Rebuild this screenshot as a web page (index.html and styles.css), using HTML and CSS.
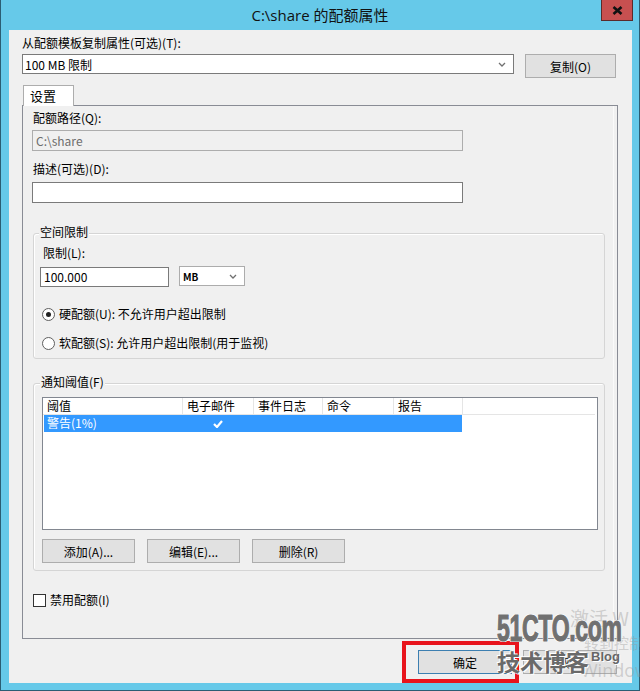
FILE: index.html
```html
<!DOCTYPE html>
<html lang="zh-CN">
<head>
<meta charset="utf-8">
<title>C:\share 的配额属性</title>
<link rel="stylesheet" href="styles.css">
</head>
<body>
<div class="window">
  <div class="titlebar">
    <span class="title">C:\share 的配额属性</span>
    <div class="close"><svg width="11" height="9" viewBox="0 0 11 9"><path d="M1.5 1 L9.5 8 M9.5 1 L1.5 8" stroke="#111" stroke-width="2.6" fill="none"/></svg></div>
  </div>
  <div class="client">
    <div class="lbl top-lbl">从配额模板复制属性(可选)(T):</div>
    <div class="tpl-row">
      <div class="combo wide"><span>100 MB 限制</span><svg class="chev" width="8" height="5" viewBox="0 0 8 5"><path d="M1 1 L4 4 L7 1" stroke="#707070" stroke-width="1.3" fill="none"/></svg></div>
      <div class="btn copy">复制(O)</div>
    </div>
    <div class="tabs"><div class="tab">设置</div></div>
    <div class="panel">
      <div class="lbl l-path">配额路径(Q):</div>
      <div class="input disabled i-path">C:\share</div>
      <div class="lbl l-desc">描述(可选)(D):</div>
      <div class="input i-desc"></div>
      <div class="group g-space">
        <div class="legend">空间限制</div>
        <div class="lbl l-limit">限制(L):</div>
        <div class="limit-row">
          <div class="input num">100.000</div>
          <div class="combo unit"><span class="mb">MB</span><svg class="chev" width="8" height="5" viewBox="0 0 8 5"><path d="M1 1 L4 4 L7 1" stroke="#707070" stroke-width="1.3" fill="none"/></svg></div>
        </div>
        <div class="radio r1"><span class="dot on"></span>硬配额(U): 不允许用户超出限制</div>
        <div class="radio r2"><span class="dot"></span>软配额(S): 允许用户超出限制(用于监视)</div>
      </div>
      <div class="group g-notify">
        <div class="legend">通知阈值(F)</div>
        <div class="list">
          <div class="list-head">
            <div class="cell c1">阈值</div>
            <div class="cell c2">电子邮件</div>
            <div class="cell c3">事件日志</div>
            <div class="cell c4">命令</div>
            <div class="cell c5">报告</div>
          </div>
          <div class="list-row sel">
            <div class="cell c1">警告(1%)</div>
            <div class="cell c2 center"><svg width="10" height="8" viewBox="0 0 10 8"><path d="M1 4 L4 7 L9 1" stroke="#fff" stroke-width="2.2" fill="none"/></svg></div>
            <div class="cell c3"></div>
            <div class="cell c4"></div>
            <div class="cell c5"></div>
          </div>
        </div>
        <div class="btn-row">
          <div class="btn small">添加(A)...</div>
          <div class="btn small">编辑(E)...</div>
          <div class="btn small">删除(R)</div>
        </div>
      </div>
      <div class="check-row"><span class="box"></span>禁用配额(I)</div>
    </div>
    <div class="footer">
      <div class="btn foot default">确定</div>
      <div class="btn foot">取消</div>
    </div>
    <div class="redbox"></div>
    <div class="watermark">
      <span class="ghost g1">激活 W</span>
      <span class="ghost g2">转到控制</span>
      <span class="ghost g3">Windows</span>
      <span class="wm-big">51CTO.com</span>
      <span class="wm-cn">技术博客</span>
      <span class="wm-blog">Blog</span>
    </div>
  </div>
</div>
</body>
</html>
```
FILE: styles.css
```css
* { box-sizing: border-box; }
html, body { margin: 0; padding: 0; }
body {
  width: 640px; height: 691px; overflow: hidden; background: #66c9e9;
  font-family: "Noto Sans CJK SC", "Noto Sans", sans-serif;
  font-size: 12px; color: #000;
}
.window {
  width: 640px; height: 691px; background: #66c9e9;
  border-left: 1px solid #2b5d73; border-right: 1px solid #2b5d73; border-bottom: 1px solid #2b5d73;
  display: flex; flex-direction: column;
}
.titlebar { height: 30px; position: relative; display: flex; align-items: center; justify-content: center; flex: none; }
.title { font-family: "Open Sans", "Noto Sans CJK SC", sans-serif; font-size: 15px; color: #111; line-height: 20px; margin-top: -1px; }
.close {
  position: absolute; top: 0; right: 6px; width: 32px; height: 21px;
  background: #c75050; border: 1px solid #5b2a2a; border-top: none;
  display: flex; align-items: center; justify-content: center;
}
.client {
  position: relative; margin: 0 7px 0 8px; height: 653px; background: #f0f0f0;
  padding-top: 5px; flex: none;
}
.lbl { line-height: 16px; height: 16px; white-space: nowrap; }
.top-lbl { margin-left: 13px; }
.tpl-row { display: flex; align-items: flex-start; margin-top: 3px; margin-left: 13px; gap: 11px; }
.combo {
  height: 20px; background: #fff; border: 1px solid #7a7a7a;
  display: flex; align-items: center; justify-content: space-between; padding: 0 7px 0 2px;
}
.combo.wide { width: 492px; }
.btn {
  background: #e1e1e1; border: 1px solid #adadad; height: 24px;
  display: flex; align-items: center; justify-content: center; white-space: nowrap;
}
.btn.copy { width: 91px; }
.tabs { margin-top: 7px; margin-left: 14px; height: 21px; margin-bottom: -1px; position: relative; z-index: 1; display: flex; }
.tab {
  width: 51px; height: 21px; background: #fff; border: 1px solid #adadad; border-bottom: none;
  padding-left: 6px; line-height: 19px; font-size: 13px;
}
.panel {
  margin-left: 13px; width: 596px; height: 534px; border: 1px solid #898c95;
  box-shadow: inset -3px 0 0 #f0f0f0, inset -4px 0 0 #fafafa;
  padding-top: 4px;
}
.l-path { margin-left: 10px; }
.input { height: 21px; border: 1px solid #7a7a7a; background: #fff; padding-left: 3px; line-height: 19px; white-space: nowrap; }
.i-path { margin: 4px 0 0 9px; width: 431px; }
.input.disabled { background: #f0f0f0; border-color: #adadad; color: #6d6d6d; }
.l-desc { margin: 10px 0 0 10px; }
.i-desc { margin: 5px 0 0 9px; width: 431px; }
.group {
  margin-left: 10px; width: 572px; border: 1px solid #d5d5d5; border-radius: 3px;
  box-shadow: inset 1px 1px 0 #fff;
}
.g-space { margin-top: 30px; height: 126px; }
.g-notify { margin-top: 24px; height: 188px; }
.legend {
  width: fit-content; background: #f0f0f0; line-height: 16px; height: 16px;
  margin: -10px 0 0 5px; padding: 0 1px;
}
.g-notify .legend { margin-left: 6px; }
.l-limit { margin: 5px 0 0 9px; }
.limit-row { display: flex; align-items: flex-start; margin: 5px 0 0 6px; gap: 10px; }
.input.num { width: 129px; height: 20px; margin-top: 1px; line-height: 18px; padding-left: 3px; }
.combo.unit { width: 66px; border-color: #acacac; padding-left: 3px; }
.mb { font-size: 10px; font-weight: bold; }
.radio { display: flex; align-items: center; line-height: 16px; height: 16px; margin-left: 8px; gap: 4px; }
.r1 { margin-top: 19px; }
.r2 { margin-top: 13px; }
.dot {
  width: 13px; height: 13px; border-radius: 50%; border: 1px solid #5f5f5f; background: #fff;
  display: flex; align-items: center; justify-content: center;
}
.dot.on::after { content: ""; width: 5px; height: 5px; border-radius: 50%; background: #222; }
.list {
  margin: 7px 0 0 8px; width: 556px; height: 133px; background: #fff; border: 1px solid #828790;
}
.list-head { display: flex; height: 17px; border-bottom: 1px solid #e5e5e5; margin-right: 2px; }
.cell { line-height: 16px; padding-left: 4px; border-right: 1px solid #e5e5e5; white-space: nowrap; }
.list-row .cell { border-right: none; }
.c1 { width: 140px; }
.c2 { width: 71px; }
.c3 { width: 69px; }
.c4 { width: 71px; }
.c5 { width: 69px; }
.list-row { display: flex; height: 17px; width: 418px; margin-left: 1px; }
.list-row .c1 { width: 139px; padding-left: 3px; }
.list-row.sel { background: #3399ff; color: #fff; }
.cell.center { display: flex; align-items: center; justify-content: center; padding-left: 0; }
.btn-row { display: flex; gap: 12px; margin: 9px 0 0 8px; }
.btn.small { width: 93px; }
.check-row { display: flex; align-items: center; height: 16px; margin: 21px 0 0 10px; gap: 4px; line-height: 16px; }
.box { width: 13px; height: 13px; border: 1px solid #333; background: #fff; }
.footer { display: flex; justify-content: flex-end; gap: 11px; margin: 11px 15px 0 0; }
.btn.foot { width: 94px; height: 24px; }
.btn.default { border-color: #3c7fb1; }
.redbox {
  position: absolute; left: 393px; top: 611px; width: 117px; height: 42px;
  border: 4px solid #e8141c; pointer-events: none;
}
.watermark { position: absolute; left: 0; top: 0; width: 100%; height: 100%; pointer-events: none; }
.watermark span { position: absolute; white-space: nowrap; }
.ghost { color: rgba(150,150,150,0.4); font-family: "Noto Sans CJK SC", sans-serif; }
.g1 { left: 561px; top: 574px; font-size: 19px; }
.g2 { left: 575px; top: 602px; font-size: 15px; }
.g3 { left: 572px; top: 628px; font-size: 18px; font-family: "Open Sans", sans-serif; }
.wm-big {
  left: 488px; top: 579px; font-family: "Liberation Sans", sans-serif; font-weight: bold;
  font-size: 36px; line-height: 40px; color: #707070; transform: scaleX(0.64); transform-origin: left top;
  -webkit-text-stroke: 1.2px #707070;
  text-shadow: 1px 1px 0 #fff, -1px -1px 0 #fff, 1px -1px 0 #fff, -1px 1px 0 #fff;
  letter-spacing: -0.5px;
}
.wm-cn {
  left: 488px; top: 616px; font-size: 23px; line-height: 30px; font-weight: bold; color: #6a6a6a;
  text-shadow: 1px 1px 0 #fff, -1px -1px 0 #fff;
}
.wm-blog {
  left: 582px; top: 619px; font-family: "Liberation Sans", sans-serif; font-weight: bold;
  font-size: 13px; line-height: 16px; color: #666;
  text-shadow: 1px 1px 0 #fff;
}
```
